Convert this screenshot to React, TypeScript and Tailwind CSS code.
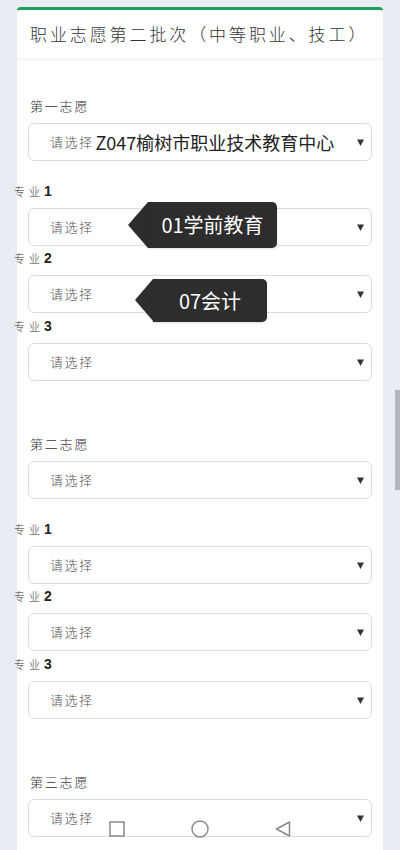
import React from 'react';

const cjk = '[font-family:"Noto_Sans_CJK_SC","Noto_Sans",sans-serif]';

type Tip = { text: string; top: number; left: number; h: number; w: number; tri: number };

const Arrow = () => (
  <svg width="7" height="7" viewBox="0 0 7 7" className="shrink-0">
    <path d="M0 0.5 H7 L3.5 7 Z" fill="#333" />
  </svg>
);

const Select: React.FC<{ value?: string; tip?: Tip }> = ({ value, tip }) => (
  <div className="relative">
    <div className="h-[38px] rounded-[6px] border border-[#dcdcdc] bg-white flex items-center pl-[21px] pr-[7px]">
      <span className={`${cjk} font-light text-[13px] tracking-[1.5px] text-[#555]`}>请选择</span>
      {value && <span className={`${cjk} text-[18px] text-[#222] ml-[2px] leading-none`}>{value}</span>}
      <div className="flex-1" />
      <Arrow />
    </div>
    {tip && (
      <div className="absolute flex z-10" style={{ top: tip.top, left: tip.left, height: tip.h }}>
        <div
          className="w-0 h-0 border-transparent border-r-[#2d2d2d]"
          style={{ borderTopWidth: tip.h / 2, borderBottomWidth: tip.h / 2, borderRightWidth: tip.tri }}
        />
        <div
          className={`${cjk} bg-[#2d2d2d] rounded-r-[5px] flex items-center justify-center text-white text-[20px] shadow`}
          style={{ width: tip.w }}
        >
          {tip.text}
        </div>
      </div>
    )}
  </div>
);

const Label: React.FC<{ text: string }> = ({ text }) => (
  <div className={`${cjk} font-light h-[18px] leading-[18px] text-[13px] tracking-[1.8px] text-[#333] pl-[2px] mb-[8px]`}>{text}</div>
);

const Major: React.FC<{ n: number }> = ({ n }) => (
  <div className="h-[18px] leading-[18px] mb-[8px] -ml-[14px] flex items-center">
    <span className={`${cjk} font-light text-[11px] tracking-[4px] text-[#333]`}>专业</span>
    <span className="[font-family:'Liberation_Sans',sans-serif] font-bold text-[14px] text-[#222]">{n}</span>
  </div>
);

const Group: React.FC<{ title: string; school?: string; tips?: (Tip | undefined)[] }> = ({ title, school, tips = [] }) => (
  <div>
    <Label text={title} />
    <Select value={school} />
    <div className="mt-[21px]">
      <Major n={1} />
      <Select tip={tips[0]} />
    </div>
    <div className="mt-[3px]">
      <Major n={2} />
      <Select tip={tips[1]} />
    </div>
    <div className="mt-[4px]">
      <Major n={3} />
      <Select />
    </div>
  </div>
);

export default function App() {
  return (
    <div className="relative w-[400px] h-[850px] overflow-hidden bg-[#e9ecf3]">
      <div className="mx-[17px] mt-[7px] bg-white rounded-t-[4px] border-t-[3px] border-[#1f9f5f]">
        <div className="h-[51px] pl-[13px] flex items-center border-b-[3px] border-[#f6f6f7]">
          <span className={`${cjk} font-light text-[17px] tracking-[2.9px] text-[#333]`}>职业志愿第二批次（中等职业、技工）</span>
        </div>
        <div className="px-[11px] pt-[36px] pb-[40px]">
          <Group
            title="第一志愿"
            school="Z047榆树市职业技术教育中心"
            tips={[
              { text: '01学前教育', top: -6, left: 100, h: 46, w: 129, tri: 20 },
              { text: '07会计', top: 4, left: 107, h: 43, w: 114, tri: 18 },
            ]}
          />
          <div className="mt-[54px]">
            <Group title="第二志愿" />
          </div>
          <div className="mt-[54px]">
            <Label text="第三志愿" />
            <Select />
          </div>
        </div>
      </div>

      {/* scrollbar thumb */}
      <div className="absolute right-0 top-[390px] w-[5px] h-[100px] bg-[#b3b5bb]" />

      {/* android nav bar */}
      <div className="absolute left-0 right-0 bottom-[12px] flex justify-center items-center gap-[66px]">
        <svg width="16" height="16" viewBox="0 0 16 16">
          <rect x="1" y="1" width="14" height="14" fill="none" stroke="#8a8a8a" strokeWidth="1.5" />
        </svg>
        <svg width="18" height="18" viewBox="0 0 18 18">
          <circle cx="9" cy="9" r="8" fill="none" stroke="#8a8a8a" strokeWidth="1.5" />
        </svg>
        <svg width="16" height="16" viewBox="0 0 16 16">
          <path d="M14.5 1 L1.5 8 L14.5 15 Z" fill="none" stroke="#8a8a8a" strokeWidth="1.5" strokeLinejoin="round" />
        </svg>
      </div>
    </div>
  );
}
